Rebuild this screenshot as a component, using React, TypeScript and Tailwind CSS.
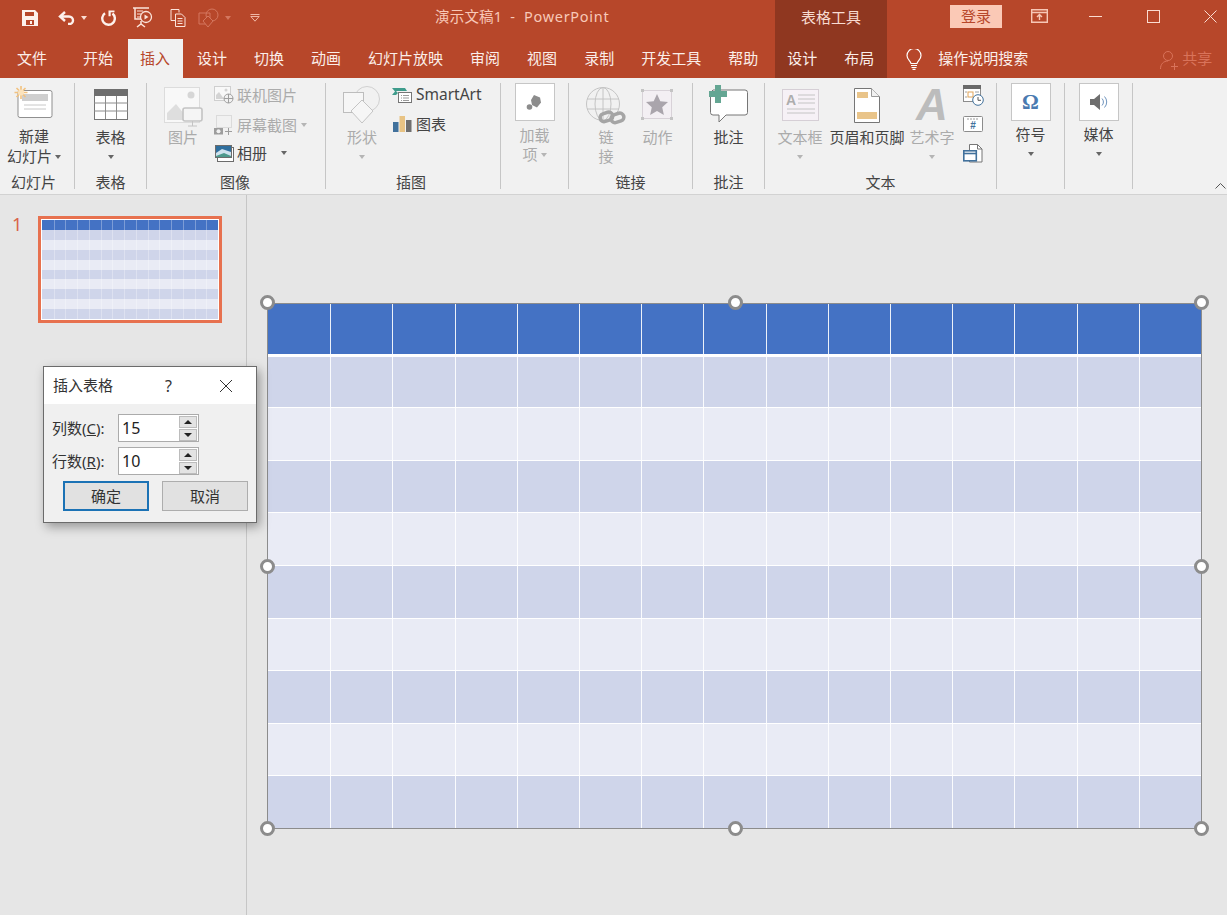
import type { ReactNode } from "react";

const tableRows = [0, 1, 2, 3, 4, 5, 6, 7, 8, 9];
const tableCols = [0, 1, 2, 3, 4, 5, 6, 7, 8, 9, 10, 11, 12, 13, 14];

const Caret = ({ light, className = "" }: { light?: boolean; className?: string }) => (
  <span
    className={`inline-block w-0 h-0 border-x-[3.5px] border-t-[4px] border-x-transparent ${
      light ? "border-t-[#b5b5b5]" : "border-t-[#666666]"
    } ${className}`}
  />
);

const Sep = () => <div className="w-px h-[106px] mt-[5px] bg-[#c6c6c6] shrink-0" />;

const Group = ({
  className,
  label,
  labelClass = "",
  children,
}: {
  className: string;
  label?: string;
  labelClass?: string;
  children: ReactNode;
}) => (
  <div className={`flex flex-col shrink-0 ${className}`}>
    <div className="h-[94px] flex items-start">{children}</div>
    <div className={`h-[20px] leading-[20px] text-center text-[15px] text-[#444444] ${labelClass}`}>{label}</div>
  </div>
);

const Large = ({
  className = "w-full",
  icon,
  lines,
  caret,
  disabled,
  box = "h-[45px]",
}: {
  className?: string;
  icon: ReactNode;
  lines: ReactNode[];
  caret?: boolean;
  disabled?: boolean;
  box?: string;
}) => (
  <div
    className={`flex flex-col items-center pt-[5px] text-[15px] leading-[19px] shrink-0 ${
      disabled ? "text-[#ababab]" : "text-[#444444]"
    } ${className}`}
  >
    <div className={`flex justify-center items-start ${box}`}>{icon}</div>
    {lines.map((l, i) => (
      <div key={i} className="whitespace-nowrap h-[19px] flex items-center">
        {l}
      </div>
    ))}
    {caret && (
      <div className="h-[19px] flex items-center">
        <Caret light={disabled} />
      </div>
    )}
  </div>
);

const Small = ({
  icon,
  text,
  disabled,
  className = "",
}: {
  icon: ReactNode;
  text: ReactNode;
  disabled?: boolean;
  className?: string;
}) => (
  <div
    className={`h-[24px] flex items-center text-[15px] whitespace-nowrap ${
      disabled ? "text-[#ababab]" : "text-[#444444]"
    } ${className}`}
  >
    <span className="w-[20px] mr-[3px] flex justify-center shrink-0">{icon}</span>
    {text}
  </div>
);

const IconBox = ({ children }: { children: ReactNode }) => (
  <div className="w-[40px] h-[38px] bg-white border border-[#c6c6c6] flex items-center justify-center">
    {children}
  </div>
);

const Handle = ({ className }: { className: string }) => (
  <span
    className={`absolute w-[15px] h-[15px] rounded-full bg-white border-[3px] border-[#8c8c8c] ${className}`}
  />
);

const Grid = ({ mini }: { mini?: boolean }) => (
  <div className="w-full h-full flex flex-col">
    {tableRows.map((r) => (
      <div
        key={r}
        className={`grid grid-cols-15 ${
          mini
            ? "flex-1"
            : r === 0
              ? "h-[52.5px] shrink-0 border-b-[3px] border-white"
              : r === 1
                ? "h-[51.5px] shrink-0 border-b border-white"
                : "flex-1 border-b border-white last:border-b-0"
        }`}
      >
        {tableCols.map((c) => (
          <div
            key={c}
            className={`${
              r === 0 ? "bg-[#4472c4]" : r % 2 === 1 ? "bg-[#cfd5ea]" : "bg-[#e9ebf5]"
            } ${
              c > 0
                ? mini
                  ? "border-l border-white/30"
                  : "border-l border-white/90"
                : ""
            }`}
          />
        ))}
      </div>
    ))}
  </div>
);

const Spinner = () => (
  <div className="w-[18px] flex flex-col gap-px">
    <div className="h-[12px] bg-[#e3e3e3] border border-[#bcbcbc] flex items-center justify-center">
      <span className="w-0 h-0 border-x-[4px] border-b-[4px] border-x-transparent border-b-[#222222]" />
    </div>
    <div className="h-[12px] bg-[#e3e3e3] border border-[#bcbcbc] flex items-center justify-center">
      <span className="w-0 h-0 border-x-[4px] border-t-[4px] border-x-transparent border-t-[#222222]" />
    </div>
  </div>
);

const DialogField = ({ name, hot, value }: { name: string; hot: string; value: string }) => (
  <div className="flex items-center h-[28px]">
    <span className="w-[74px] pl-[8px] text-[15px] text-[#333333] whitespace-nowrap">
      {name}(<span className="underline">{hot}</span>):
    </span>
    <div className="w-[81px] h-[28px] bg-white border border-[#ababab] flex items-center justify-between pl-[3px] pr-[1px]">
      <span className="text-[16px] text-[#222222]">{value}</span>
      <Spinner />
    </div>
  </div>
);

const InsertDialog = () => (
  <div className="absolute left-[43px] top-[366px] w-[214px] h-[157px] bg-[#f0f0f0] border border-[#6b6b6b] shadow-[3px_4px_10px_rgba(0,0,0,0.35)] flex flex-col">
    <div className="h-[37px] bg-white flex items-center pl-[9px] text-[15px] text-[#333333]">
      <span className="w-[112px]">插入表格</span>
      <span className="w-[20px] text-[16px]">?</span>
      <svg width="14" height="14" viewBox="0 0 14 14" className="ml-[34px]">
        <path d="M1 1l12 12M13 1L1 13" stroke="#333" strokeWidth="1" fill="none" />
      </svg>
    </div>
    <div className="pt-[10px] flex flex-col gap-[5px]">
      <DialogField name="列数" hot="C" value="15" />
      <DialogField name="行数" hot="R" value="10" />
    </div>
    <div className="flex pl-[19px] gap-[13px] mt-[6px]">
      <div className="w-[86px] h-[30px] bg-[#e1e1e1] border-2 border-[#1b72b5] flex items-center justify-center text-[15px] text-[#333333]">
        确定
      </div>
      <div className="w-[86px] h-[30px] bg-[#e1e1e1] border border-[#adadad] flex items-center justify-center text-[15px] text-[#333333]">
        取消
      </div>
    </div>
  </div>
);

const tabs = ["开始", "插入", "设计", "切换", "动画", "幻灯片放映", "审阅", "视图", "录制", "开发工具", "帮助"];

export default function App() {
  return (
    <div className="relative w-[1227px] h-[915px] overflow-hidden bg-[#e6e6e6] font-['Noto_Sans','Noto_Sans_CJK_SC',sans-serif] flex flex-col">
      {/* title row */}
      <div className="h-[39px] bg-[#b7472a] flex shrink-0">
        <div className="w-[435px] flex items-center pl-[22px] pb-[4px] shrink-0">
          <svg width="16" height="16" viewBox="0 0 16 16">
            <path d="M0 0h13l3 3v13H0z M3 2v4h9V2z M4 10v5h8v-5z M8 11h2v3H8z" fill="#fdf1ec" fillRule="evenodd" />
          </svg>
          <svg width="17" height="14" viewBox="0 0 17 14" className="ml-[20px]">
            <path d="M7 1L2 5.5 7 10M2 5.5h9a4 4 0 0 1 4 4 3.5 3.5 0 0 1-3.5 3.5H10" fill="none" stroke="#fdf1ec" strokeWidth="2.4" />
          </svg>
          <Caret className="ml-[6px] border-t-[#fbdcd1]" />
          <svg width="16" height="16" viewBox="0 0 16 16" className="ml-[13px]">
            <path d="M5 3.2A6.3 6.3 0 1 0 12.5 3.5" fill="none" stroke="#fdf1ec" strokeWidth="2.4" />
            <path d="M8.5 0.5h6v1.8l-3.8 0v4h-2.2z" fill="#fdf1ec" />
          </svg>
          <svg width="20" height="21" viewBox="0 0 20 21" className="ml-[17px]">
            <path d="M0 1h16M2 1v11h6" fill="none" stroke="#fbe3da" strokeWidth="1.5" />
            <path d="M4 4h6M4 7h4M4 10h3" stroke="#fbe3da" strokeWidth="1" />
            <circle cx="13" cy="10" r="5.5" fill="none" stroke="#fbe3da" strokeWidth="1.3" />
            <path d="M11.5 7.5l4 2.5-4 2.5z" fill="#fbe3da" />
            <path d="M8 14v3M4 20l4-3 4 3" fill="none" stroke="#fbe3da" strokeWidth="1.5" />
          </svg>
          <svg width="16" height="18" viewBox="0 0 16 18" className="ml-[17px]">
            <path d="M1 .5h8v3M1 .5v11h4" fill="none" stroke="#fbe3da" />
            <path d="M5.5 5h6l3.5 3.5v9H5.5z" fill="none" stroke="#fbe3da" />
            <path d="M7.5 9.5h5M7.5 12h5M7.5 14.5h5" stroke="#fbe3da" />
          </svg>
          <svg width="22" height="20" viewBox="0 0 22 20" className="ml-[12px]">
            <path d="M1 5h11v11H1z" fill="none" stroke="#d4775f" />
            <circle cx="14" cy="7" r="6" fill="none" stroke="#d4775f" />
            <path d="M10 8l5 5-5 6-5-6z" fill="#b7472a" stroke="#d4775f" />
          </svg>
          <Caret className="ml-[5px] border-t-[#d4775f]" />
          <svg width="10" height="8" viewBox="0 0 10 8" className="ml-[19px]">
            <path d="M.5.5h9M.8 2.5L5 7.2l4.2-4.7z" fill="none" stroke="#efb8a6" />
          </svg>
        </div>
        <div className="w-[340px] pt-[6px] text-[14.5px] text-[#f8c9b8] shrink-0 whitespace-pre">
          <span className="tracking-[0.2px]">演示文稿1  -  </span>
          <span className="ml-[1px] tracking-[0.7px]">PowerPoint</span>
        </div>
        <div className="w-[112px] bg-[#8f3720] text-center pt-[6px] text-[15px] text-[#f8dcd2] shrink-0">表格工具</div>
        <div className="flex items-start shrink-0">
          <div className="ml-[63px] mt-[5px] w-[52px] h-[23px] bg-[#fbc9b6] text-[#b7472a] text-[15px] leading-[23px] text-center">
            登录
          </div>
          <svg width="17" height="14" viewBox="0 0 17 14" className="ml-[29px] mt-[9px]">
            <path d="M.7.7h15.600v12.600H.7zM.7 3.500h15.600M8.500 11V6M6 8l2.500-2.500L11 8" fill="none" stroke="#f7c7b6" strokeWidth="1.4" />
          </svg>
          <div className="ml-[41px] mt-[16px] w-[13px] h-px bg-[#fbdcd1]" />
          <div className="ml-[45px] mt-[10px] w-[13px] h-[13px] border border-[#fbdcd1]" />
          <svg width="13" height="13" viewBox="0 0 13 13" className="ml-[44px] mt-[10px]">
            <path d="M.5.5l12 12M12.5.5l-12 12" stroke="#fbdcd1" fill="none" />
          </svg>
        </div>
      </div>

      {/* tab row */}
      <div className="h-[39px] bg-[#b7472a] flex text-[15px] text-[#fbeee9] shrink-0">
        <div className="w-[69.5px] pl-[17px] pt-[8px] shrink-0">文件</div>
        {tabs.map((t) =>
          t === "插入" ? (
            <div key={t} className="mx-px px-[12.5px] pt-[8px] bg-[#f1f1f1] text-[#b7472a] shrink-0">
              {t}
            </div>
          ) : (
            <div key={t} className="px-[13.5px] pt-[8px] whitespace-nowrap shrink-0">
              {t}
            </div>
          ),
        )}
        <div className="ml-[3.5px] w-[112px] bg-[#8f3720] flex pl-[12px] gap-[27px] pt-[8px] shrink-0">
          <span>设计</span>
          <span>布局</span>
        </div>
        <svg width="16" height="21" viewBox="0 0 16 21" className="ml-[19px] mt-[10px] shrink-0">
          <path d="M5 14.5C4.5 12 1 10.5 1 6.5a7 7 0 0 1 14 0c0 4-3.5 5.5-4 8z" fill="none" stroke="#fff" strokeWidth="1.2" />
          <path d="M5 16.5h6M5.5 18.5h5M6.5 20.3h3" stroke="#fff" strokeWidth="1.2" />
        </svg>
        <div className="ml-[16px] pt-[8px] whitespace-nowrap shrink-0">操作说明搜索</div>
        <svg width="19" height="19" viewBox="0 0 19 19" className="ml-[132px] mt-[12px] shrink-0">
          <circle cx="8" cy="5" r="4.5" fill="none" stroke="#d9735a" />
          <path d="M.5 18c0-5 3-8 7.5-8M11 15.5h7M14.5 12v7" fill="none" stroke="#d9735a" />
        </svg>
        <div className="ml-[3px] pt-[8px] text-[#d9735a] shrink-0">共享</div>
      </div>

      {/* ribbon */}
      <div className="relative h-[117px] bg-[#f1f1f1] border-b border-[#d2d2d2] flex shrink-0">
        <Group className="w-[74px]" label="幻灯片" labelClass="pr-[7px]">
          <Large
            className="w-[68px]"
            icon={
              <svg width="40" height="36" viewBox="0 0 40 36" className="mt-[3px]">
                <rect x="4" y="4.5" width="34" height="27" rx="2" fill="#fff" stroke="#8f8f8f" />
                <rect x="8" y="8" width="26" height="7" fill="#cfcfcf" />
                <path d="M10 19h22M10 23h22" stroke="#c8c8c8" />
                <g stroke="#f2c27f" strokeWidth="1.6">
                  <path d="M7 0v13M0.5 6.5h13M2.5 2l9 9M11.5 2l-9 9" />
                </g>
                <circle cx="7" cy="6.5" r="3" fill="#fbe3bd" />
              </svg>
            }
            lines={[
              <span className="-mt-[2px]">新建</span>,
              <span className="flex items-center gap-[3px]">
                幻灯片
                <Caret />
              </span>,
            ]}
          />
        </Group>
        <Sep />
        <Group className="w-[71px]" label="表格">
          <Large
            icon={
              <svg width="34" height="31" viewBox="0 0 34 31" className="mt-[6px]">
                <rect x=".5" y=".5" width="33" height="30" fill="#fff" stroke="#767676" />
                <rect width="34" height="7" fill="#6e6e6e" />
                <path d="M11.5 7v23M22.5 7v23M0 14h34M0 22h34" stroke="#8c8c8c" />
              </svg>
            }
            lines={["表格"]}
            caret
          />
        </Group>
        <Sep />
        <Group className="w-[178px]" label="图像" labelClass="pr-[2px]">
          <Large
            className="w-[62px] ml-[5px]"
            disabled
            icon={
              <svg width="40" height="44" viewBox="0 0 40 44" className="mt-[4px] ml-[2px]">
                <rect x=".5" y=".5" width="35" height="35" fill="#f8f8f8" stroke="#dcdcdc" />
                <circle cx="27" cy="8" r="3.5" fill="#d6d6d6" />
                <path d="M3 33V26l9-9 13 16z" fill="#dedede" />
                <rect x="19" y="21" width="19" height="13" rx="2" fill="#f5f5f5" stroke="#c4c4c4" strokeWidth="1.6" />
                <path d="M28.500 34v5M24 39h9" stroke="#c4c4c4" />
              </svg>
            }
            lines={["图片"]}
          />
          <div className="flex flex-col pt-[5px]">
            <Small
              disabled
              text="联机图片"
              icon={
                <svg width="20" height="18" viewBox="0 0 20 18">
                  <rect x=".5" y=".5" width="16" height="14" fill="#f8f8f8" stroke="#cfcfcf" />
                  <path d="M2 13V9l3-3 5 7z" fill="#d4d4d4" />
                  <circle cx="12" cy="4" r="1.5" fill="#d4d4d4" />
                  <circle cx="14.500" cy="12.500" r="4.500" fill="#f1f1f1" stroke="#9f9f9f" />
                  <path d="M10 12.500h9M14.500 8v9" stroke="#9f9f9f" />
                </svg>
              }
            />
            <Small
              disabled
              className="mt-[6px]"
              text={
                <span className="flex items-center gap-[4px]">
                  屏幕截图
                  <Caret light />
                </span>
              }
              icon={
                <svg width="20" height="20" viewBox="0 0 20 20">
                  <rect x="2.500" y=".5" width="15" height="12" fill="none" stroke="#c4c4c4" strokeDasharray="1 1" />
                  <rect x="0" y="13" width="9" height="6.500" fill="#9d9d9d" />
                  <circle cx="4.500" cy="16.200" r="2" fill="#f1f1f1" />
                  <path d="M11 16.500h7M14.500 13v7" stroke="#9d9d9d" />
                </svg>
              }
            />
            <Small
              className="mt-[4px]"
              text={
                <span className="flex items-center gap-[14px]">
                  相册
                  <Caret />
                </span>
              }
              icon={
                <svg width="19" height="17" viewBox="0 0 19 17">
                  <rect x="2.500" y="2.500" width="16" height="14" fill="#fff" stroke="#6c6c6c" />
                  <rect x=".5" y=".5" width="16" height="12" fill="#2f6f9e" stroke="#6c6c6c" />
                  <path d="M1 8l6-4 9 3v5H1z" fill="#cfe3ee" />
                  <path d="M1 11l8-3 7 3v1H1z" fill="#4d9a8d" />
                </svg>
              }
            />
          </div>
        </Group>
        <Sep />
        <Group className="w-[174px]" label="插图" labelClass="pr-[4px]">
          <Large
            className="w-[60px] ml-[6px]"
            disabled
            icon={
              <svg width="38" height="38" viewBox="0 0 38 38" className="mt-[3px]">
                <circle cx="24" cy="13" r="12.500" fill="none" stroke="#d0d0d0" />
                <rect x=".5" y="6.500" width="20" height="20" fill="#f6f6f6" stroke="#bdbdbd" />
                <path d="M19 14l11 11-11 12L8 25z" fill="#f6f6f6" stroke="#c4c4c4" />
              </svg>
            }
            lines={["形状"]}
            caret
          />
          <div className="flex flex-col pt-[5px]">
            <Small
              text={<span className="ml-px text-[15.5px]">SmartArt</span>}
              icon={
                <svg width="20" height="15" viewBox="0 0 20 15">
                  <path d="M0 0h13l2 3H4l2 2-2 2H0l3-3.500z" fill="#3f9c8c" />
                  <rect x="6.500" y="4.500" width="13" height="10" fill="#fff" stroke="#767676" />
                  <path d="M9 7.500h1M11 7.500h6M9 10h1M11 10h6M9 12.500h1M11 12.500h6" stroke="#9a9a9a" />
                </svg>
              }
            />
            <Small
              className="mt-[5px]"
              text={<span className="ml-px">图表</span>}
              icon={
                <svg width="19" height="18" viewBox="0 0 19 18">
                  <rect x="0" y="7" width="5.500" height="10" fill="#41719c" />
                  <rect x="6.500" y="1" width="5.500" height="16" fill="#e8c384" />
                  <rect x="13" y="5" width="5.500" height="12" fill="#6f6f6f" />
                </svg>
              }
            />
          </div>
        </Group>
        <Sep />
        <Group className="w-[67px]" label="">
          <Large
            disabled
            box="h-[43px]"
            icon={
              <IconBox>
                <svg width="17" height="17" viewBox="0 0 17 17">
                  <path d="M8 1l6 2.500 1 5-4 5-5-2.500-1-5z" fill="#8c8c8c" />
                  <circle cx="3.500" cy="13" r="2.800" fill="#8c8c8c" />
                </svg>
              </IconBox>
            }
            lines={[
              "加载",
              <span className="flex items-center gap-[3px]">
                项
                <Caret light />
              </span>,
            ]}
          />
        </Group>
        <Sep />
        <Group className="w-[123px]" label="链接">
          <Large
            className="w-[48px] ml-[13px]"
            disabled
            icon={
              <svg width="40" height="40" viewBox="0 0 40 40" className="mt-[4px]">
                <g fill="none" stroke="#c4c4c4">
                  <circle cx="17" cy="17" r="16.500" />
                  <ellipse cx="17" cy="17" rx="8" ry="16.500" />
                  <path d="M1 12h32M1 22h32M17 0v34" />
                </g>
                <g fill="none" stroke="#a5a5a5" strokeWidth="3.500">
                  <rect x="14" y="26" width="13" height="8" rx="4" transform="rotate(-18 20 30)" />
                  <rect x="25" y="27" width="13" height="8" rx="4" transform="rotate(-18 31 31)" />
                </g>
              </svg>
            }
            lines={["链", "接"]}
          />
          <Large
            className="w-[55px]"
            disabled
            icon={
              <svg width="32" height="31" viewBox="0 0 32 31" className="mt-[6px] -ml-[2px]">
                <rect x="1.500" y="1.500" width="29" height="28" fill="#f3eff3" stroke="#d8d2d8" />
                <g fill="#c4c4c4">
                  <rect width="3" height="3" />
                  <rect x="29" width="3" height="3" />
                  <rect y="28" width="3" height="3" />
                  <rect x="29" y="28" width="3" height="3" />
                </g>
                <path d="M16 5l3.300 7.200 7.700.8-5.800 5.200 1.700 7.800-6.900-4-6.900 4 1.700-7.800L5 13l7.700-.8z" fill="#aaa5ac" />
              </svg>
            }
            lines={["动作"]}
          />
        </Group>
        <Sep />
        <Group className="w-[71px]" label="批注">
          <Large
            icon={
              <svg width="39" height="38" viewBox="0 0 39 38" className="mt-[2px]">
                <path d="M4 5h32a2.500 2.500 0 0 1 2.500 2.500v20a2.500 2.500 0 0 1-2.500 2.500H17l-7 7v-7H4a2.500 2.500 0 0 1-2.500-2.500v-20z" fill="#fff" stroke="#767676" />
                <path d="M6 0h6v6h6v6h-6v6H6v-6H0V6h6z" fill="#64a693" />
              </svg>
            }
            lines={["批注"]}
          />
        </Group>
        <Sep />
        <Group className="w-[231px]" label="文本">
          <Large
            className="w-[58px] ml-[6px]"
            disabled
            icon={
              <svg width="37" height="32" viewBox="0 0 37 32" className="mt-[6px]">
                <rect x=".5" y=".5" width="36" height="31" fill="#f6f1f6" stroke="#d6cfd6" />
                <text x="4" y="16" fontSize="14" fontWeight="700" fill="#adadad" fontFamily="Liberation Sans, sans-serif">
                  A
                </text>
                <path d="M16 6h17M16 10h17M16 14h17M5 20h28M5 24h28" stroke="#c4c4c4" />
              </svg>
            }
            lines={["文本框"]}
            caret
          />
          <Large
            className="w-[76px]"
            icon={
              <svg width="26" height="35" viewBox="0 0 26 35" className="mt-[5px]">
                <path d="M.5.5h17l8 8v26H.5z" fill="#fff" stroke="#767676" />
                <path d="M17.500.5v8h8" fill="#f1f1f1" stroke="#9a9a9a" />
                <rect x="3" y="4" width="11" height="6" fill="#e9c489" />
                <rect x="3" y="24" width="20" height="7" fill="#e9c489" />
              </svg>
            }
            lines={["页眉和页脚"]}
          />
          <Large
            className="w-[50px] ml-[2px]"
            disabled
            icon={
              <span className="font-['Liberation_Sans',sans-serif] italic font-bold text-[44px] leading-[44px] text-[#bcbcbc]">
                A
              </span>
            }
            lines={["艺术字"]}
            caret
          />
          <div className="flex flex-col ml-[6px] pt-[7px]">
            <svg width="21" height="21" viewBox="0 0 21 21">
              <rect x=".5" y=".5" width="17" height="16" fill="#fff" stroke="#8c8c8c" />
              <rect width="18" height="4" fill="#6a6a6a" />
              <rect x="5" y="7" width="5" height="5" fill="none" stroke="#e0a458" />
              <path d="M12 7h4M2 7h2M2 12h2M12 12h4" stroke="#a0a0a0" />
              <circle cx="15" cy="15" r="5.300" fill="#fff" stroke="#41719c" />
              <path d="M15 12v3.300h3" fill="none" stroke="#555" />
            </svg>
            <svg width="20" height="16" viewBox="0 0 20 16" className="mt-[10px]">
              <rect x=".5" y=".5" width="19" height="15" rx="1" fill="#fff" stroke="#8c8c8c" />
              <path d="M4 3h12" stroke="#9a9a9a" strokeDasharray="2 1" />
              <text x="10" y="13" fontSize="10" fontWeight="700" textAnchor="middle" fill="#41719c" fontFamily="Liberation Sans, sans-serif">
                #
              </text>
            </svg>
            <svg width="20" height="19" viewBox="0 0 20 19" className="mt-[12px]">
              <path d="M6.500.5h8l4.500 4.500v13H6.500z" fill="#fff" stroke="#767676" />
              <path d="M14.500.5V5H19" fill="none" stroke="#767676" />
              <rect x=".8" y="6.800" width="12.500" height="10" fill="#fff" stroke="#41719c" strokeWidth="1.600" />
              <path d="M.8 9.500h12.500" stroke="#41719c" strokeWidth="1.600" />
            </svg>
          </div>
        </Group>
        <Sep />
        <Group className="w-[67px]">
          <Large
            box="h-[42px]"
            icon={
              <IconBox>
                <span className="font-['Liberation_Serif',serif] font-bold text-[21px] leading-none text-[#4a7ab0]">Ω</span>
              </IconBox>
            }
            lines={["符号"]}
            caret
          />
        </Group>
        <Sep />
        <Group className="w-[67px]">
          <Large
            box="h-[42px]"
            icon={
              <IconBox>
                <svg width="18" height="16" viewBox="0 0 18 16">
                  <path d="M0 5h4l6-5v16l-6-5H0z" fill="#6e6e6e" />
                  <path d="M12 4.500a5 5 0 0 1 0 7M14.500 2.500a8 8 0 0 1 0 11" fill="none" stroke="#6f94bd" />
                </svg>
              </IconBox>
            }
            lines={["媒体"]}
            caret
          />
        </Group>
        <Sep />
        <svg width="11" height="6" viewBox="0 0 11 6" className="absolute right-[1px] bottom-[5px]">
          <path d="M.5 5.500l5-5 5 5" fill="none" stroke="#555" />
        </svg>
      </div>

      {/* body */}
      <div className="flex-1 flex min-h-0">
        <div className="w-[247px] border-r border-[#c6c6c6] flex items-start pt-[21px] pl-[12px] shrink-0">
          <span className="w-[26px] -mt-px text-[18px] leading-[18px] text-[#d9644a]">1</span>
          <div className="w-[184px] h-[107px] border-[3px] border-[#e7714f] bg-white p-px">
            <Grid mini />
          </div>
        </div>
        <div className="flex-1 pl-[20px] pt-[108px]">
          <div className="relative w-[935px] h-[526px] border border-[#8c8c8c]">
            <Grid />
            <Handle className="-left-[8px] -top-[9px]" />
            <Handle className="left-[460px] -top-[9px]" />
            <Handle className="-right-[8px] -top-[9px]" />
            <Handle className="-left-[8px] top-[255px]" />
            <Handle className="-right-[8px] top-[255px]" />
            <Handle className="-left-[8px] -bottom-[8px]" />
            <Handle className="left-[460px] -bottom-[8px]" />
            <Handle className="-right-[8px] -bottom-[8px]" />
          </div>
        </div>
      </div>

      <InsertDialog />
    </div>
  );
}
